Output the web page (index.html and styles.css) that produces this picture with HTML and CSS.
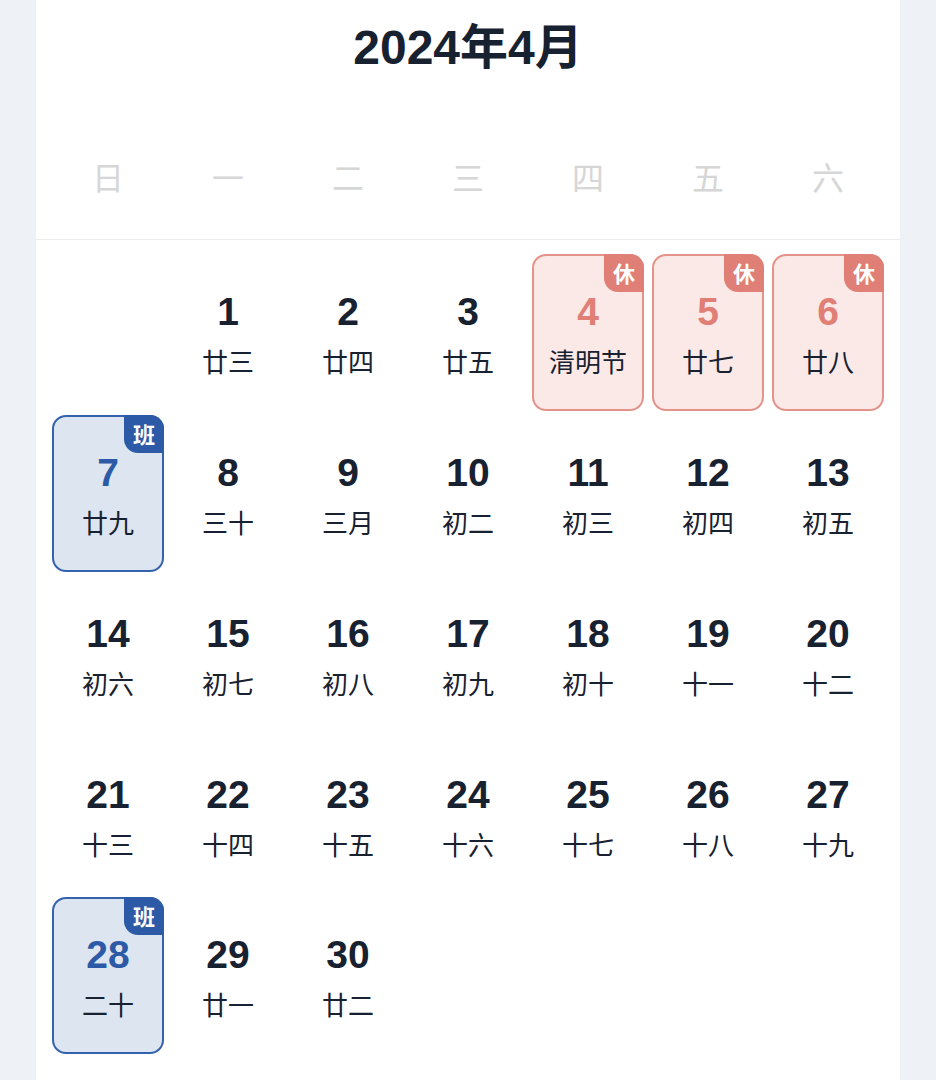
FILE: index.html
```html
<!DOCTYPE html>
<html lang="zh-CN">
<head>
    <meta charset="UTF-8">
    <meta name="viewport" content="width=device-width, initial-scale=1.0">
    <title>2024年4月</title>
    <link rel="stylesheet" href="styles.css">
</head>
<body>
    <div class="calendar">
        <h1 class="month-title">2024年4月</h1>

        <div class="weekdays">
            <span>日</span><span>一</span><span>二</span><span>三</span><span>四</span><span>五</span><span>六</span>
        </div>

        <div class="days">
            <div class="day empty"></div>
            <div class="day"><span class="num">1</span><span class="lunar">廿三</span></div>
            <div class="day"><span class="num">2</span><span class="lunar">廿四</span></div>
            <div class="day"><span class="num">3</span><span class="lunar">廿五</span></div>
            <div class="day rest"><span class="tag">休</span><span class="num">4</span><span class="lunar">清明节</span></div>
            <div class="day rest"><span class="tag">休</span><span class="num">5</span><span class="lunar">廿七</span></div>
            <div class="day rest"><span class="tag">休</span><span class="num">6</span><span class="lunar">廿八</span></div>

            <div class="day work"><span class="tag">班</span><span class="num">7</span><span class="lunar">廿九</span></div>
            <div class="day"><span class="num">8</span><span class="lunar">三十</span></div>
            <div class="day"><span class="num">9</span><span class="lunar">三月</span></div>
            <div class="day"><span class="num">10</span><span class="lunar">初二</span></div>
            <div class="day"><span class="num">11</span><span class="lunar">初三</span></div>
            <div class="day"><span class="num">12</span><span class="lunar">初四</span></div>
            <div class="day"><span class="num">13</span><span class="lunar">初五</span></div>

            <div class="day"><span class="num">14</span><span class="lunar">初六</span></div>
            <div class="day"><span class="num">15</span><span class="lunar">初七</span></div>
            <div class="day"><span class="num">16</span><span class="lunar">初八</span></div>
            <div class="day"><span class="num">17</span><span class="lunar">初九</span></div>
            <div class="day"><span class="num">18</span><span class="lunar">初十</span></div>
            <div class="day"><span class="num">19</span><span class="lunar">十一</span></div>
            <div class="day"><span class="num">20</span><span class="lunar">十二</span></div>

            <div class="day"><span class="num">21</span><span class="lunar">十三</span></div>
            <div class="day"><span class="num">22</span><span class="lunar">十四</span></div>
            <div class="day"><span class="num">23</span><span class="lunar">十五</span></div>
            <div class="day"><span class="num">24</span><span class="lunar">十六</span></div>
            <div class="day"><span class="num">25</span><span class="lunar">十七</span></div>
            <div class="day"><span class="num">26</span><span class="lunar">十八</span></div>
            <div class="day"><span class="num">27</span><span class="lunar">十九</span></div>

            <div class="day work"><span class="tag">班</span><span class="num">28</span><span class="lunar">二十</span></div>
            <div class="day"><span class="num">29</span><span class="lunar">廿一</span></div>
            <div class="day"><span class="num">30</span><span class="lunar">廿二</span></div>
        </div>
    </div>
</body>
</html>
```

FILE: styles.css
```css
:root {
    --text-color: #18212f;
    --muted-color: #d6d6d6;
    --bg-color: #eef2f6;
    --rest-color: #df7f75;
    --rest-border: #e3938a;
    --rest-bg: #fbe9e8;
    --work-color: #2c5aa6;
    --work-border: #3462ad;
    --work-bg: #dde5f0;
}

body {
    margin: 0;
    background-color: var(--bg-color);
    font-family: 'Liberation Sans', 'Noto Sans CJK SC', sans-serif;
    color: var(--text-color);
}

.calendar {
    background-color: white;
    margin: 0 36px;
    min-height: 1100px;
}

.month-title {
    margin: 0;
    padding-top: 19px;
    font-size: 48px;
    line-height: 58px;
    font-weight: bold;
    text-align: center;
}

.weekdays {
    display: grid;
    grid-template-columns: repeat(7, 1fr);
    padding: 77px 12px 41px;
    border-bottom: 1px solid #e8eaec;
    font-family: 'Noto Sans CJK SC', sans-serif;
    font-size: 32px;
    line-height: 44px;
    color: var(--muted-color);
    text-align: center;
}

.days {
    display: grid;
    grid-template-columns: repeat(7, 1fr);
    grid-auto-rows: 160.75px;
    padding: 12px 12px 0;
}

.day {
    position: relative;
    margin: 2px 4px;
    padding-top: 4px;
    border: 2px solid transparent;
    border-radius: 14px;
    display: flex;
    flex-direction: column;
    align-items: center;
    justify-content: center;
    gap: 10px;
}

.num {
    font-size: 39px;
    line-height: 44px;
    font-weight: bold;
}

.lunar {
    font-family: 'Noto Sans CJK SC', sans-serif;
    font-size: 26px;
    line-height: 34px;
}

.tag {
    position: absolute;
    top: -2px;
    right: -2px;
    width: 40px;
    height: 38px;
    border-radius: 0 14px 0 14px;
    font-family: 'Noto Sans CJK SC', sans-serif;
    font-size: 22px;
    font-weight: bold;
    line-height: 36px;
    color: white;
    text-align: center;
}

.rest {
    background-color: var(--rest-bg);
    border-color: var(--rest-border);
}

.rest .num {
    color: var(--rest-color);
}

.rest .tag {
    background-color: var(--rest-color);
}

.work {
    background-color: var(--work-bg);
    border-color: var(--work-border);
}

.work .num {
    color: var(--work-color);
}

.work .tag {
    background-color: var(--work-color);
}
```
